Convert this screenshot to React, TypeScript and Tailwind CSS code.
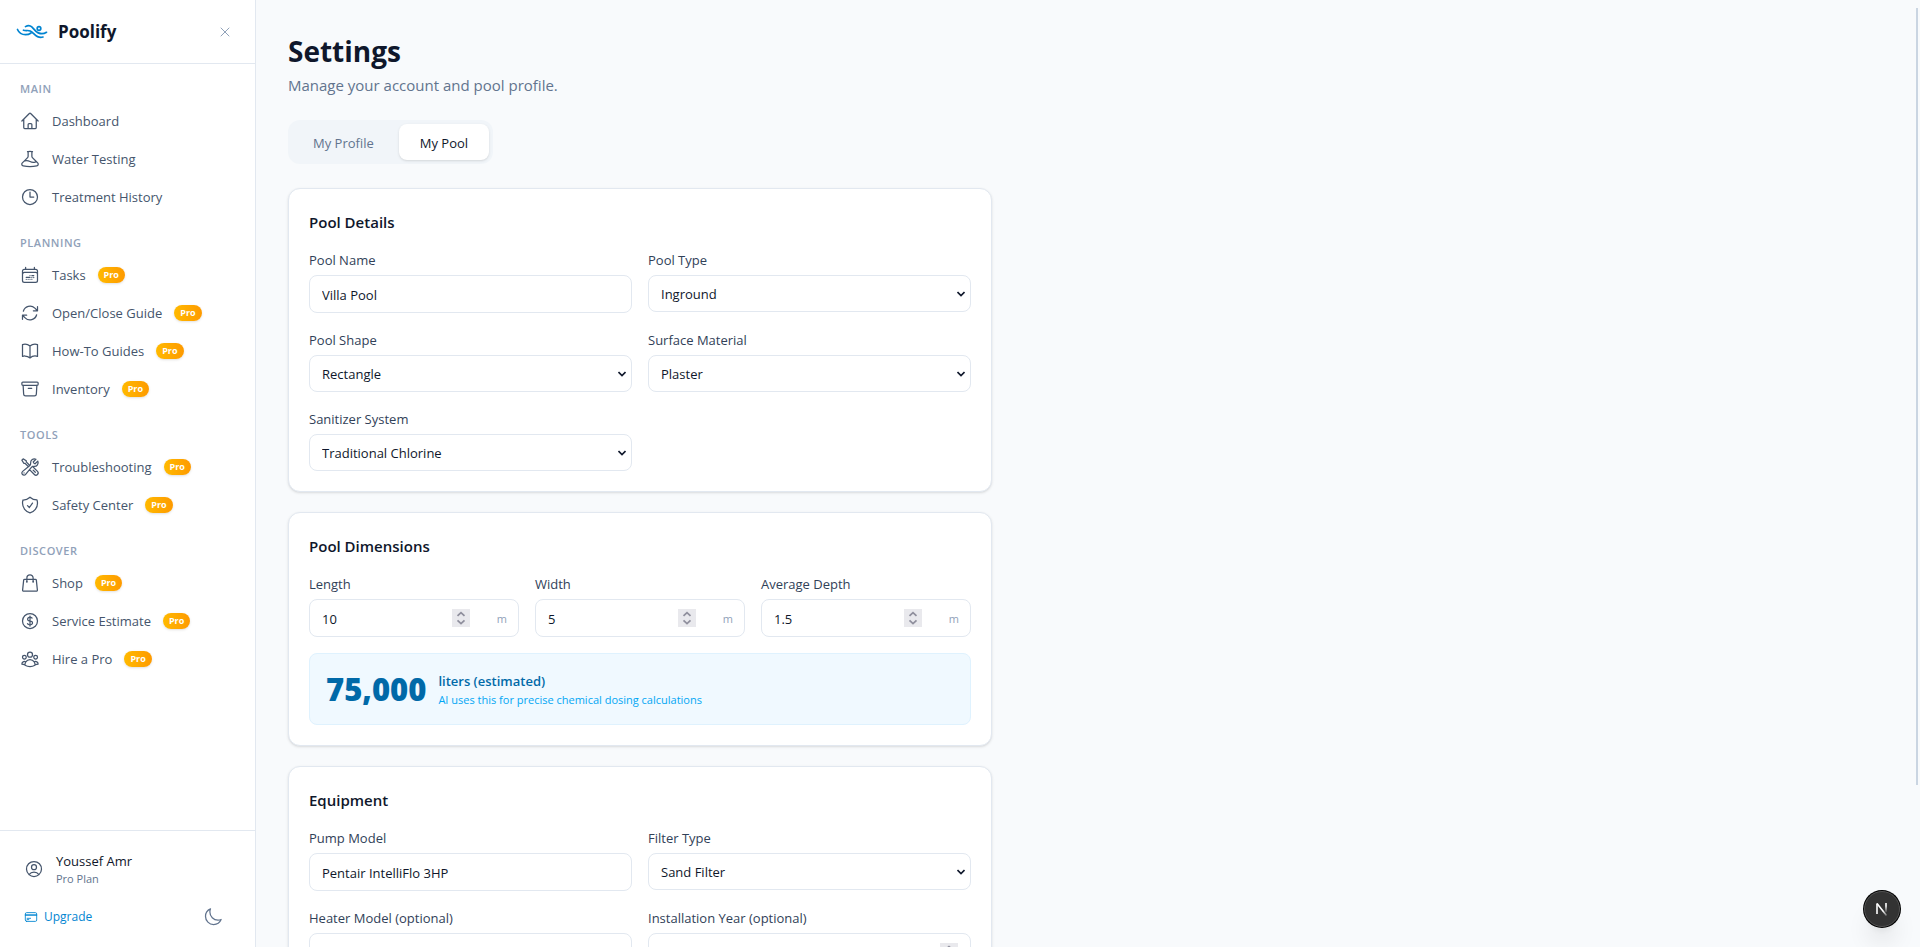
import type { ReactNode } from "react";
import type { IconType } from "react-icons";
import {
  HiOutlineArchiveBox,
  HiOutlineArrowPath,
  HiOutlineBeaker,
  HiOutlineBookOpen,
  HiOutlineCalendarDateRange,
  HiOutlineClock,
  HiOutlineCreditCard,
  HiOutlineCurrencyDollar,
  HiOutlineHome,
  HiOutlineMoon,
  HiOutlineShieldCheck,
  HiOutlineShoppingBag,
  HiOutlineUserCircle,
  HiOutlineUserGroup,
  HiOutlineWrenchScrewdriver,
  HiOutlineXMark,
} from "react-icons/hi2";

type NavItem = { label: string; icon: IconType; pro?: boolean };

// Sidebar navigation, grouped by section
const sections: { title: string; items: NavItem[] }[] = [
  {
    title: "Main",
    items: [
      { label: "Dashboard", icon: HiOutlineHome },
      { label: "Water Testing", icon: HiOutlineBeaker },
      { label: "Treatment History", icon: HiOutlineClock },
    ],
  },
  {
    title: "Planning",
    items: [
      { label: "Tasks", icon: HiOutlineCalendarDateRange, pro: true },
      { label: "Open/Close Guide", icon: HiOutlineArrowPath, pro: true },
      { label: "How-To Guides", icon: HiOutlineBookOpen, pro: true },
      { label: "Inventory", icon: HiOutlineArchiveBox, pro: true },
    ],
  },
  {
    title: "Tools",
    items: [
      { label: "Troubleshooting", icon: HiOutlineWrenchScrewdriver, pro: true },
      { label: "Safety Center", icon: HiOutlineShieldCheck, pro: true },
    ],
  },
  {
    title: "Discover",
    items: [
      { label: "Shop", icon: HiOutlineShoppingBag, pro: true },
      { label: "Service Estimate", icon: HiOutlineCurrencyDollar, pro: true },
      { label: "Hire a Pro", icon: HiOutlineUserGroup, pro: true },
    ],
  },
];

const fieldClass =
  "block w-full rounded-lg border border-slate-200 bg-white px-3 pt-[9px] pb-[7px] text-[13px] text-slate-900 outline-none focus:border-sky-500";

function Logo() {
  return (
    <svg viewBox="0 0 32 16" className="h-4 w-8 text-sky-600" fill="none" stroke="currentColor" strokeWidth="1.7" strokeLinecap="round" aria-hidden="true">
      <path d="M1.500 5.500C3 9 6 10.700 9.500 10.700c2.300 0 4-.6 5.500-1.700" />
      <path d="M7.500 6.200c2.500.8 4.500-.2 6.800.8 2.700 1.200 4.200 4.300 7.200 5.600 1.800.8 3.500.9 5.500.4" />
      <path d="M9.500 2.600c2.200-1.400 4.600-1.300 6.300.2 2.200 2 3.400 4.800 6.400 6.100 2.800 1.200 5.800 1 8.300-.6" />
      <circle cx="23" cy="4.500" r="1.800" />
    </svg>
  );
}

function Card({ title, children }: { title: string; children: ReactNode }) {
  return (
    <section className="rounded-xl border border-slate-200 bg-white p-5 shadow-sm">
      <h2 className="mb-3.5 text-[15px] leading-[26px] font-semibold text-slate-900">{title}</h2>
      {children}
    </section>
  );
}

function Field({ id, label, children }: { id: string; label: string; children: ReactNode }) {
  return (
    <div>
      <label htmlFor={id} className="mb-1 block text-[13px] leading-[22px] text-slate-700">
        {label}
      </label>
      {children}
    </div>
  );
}

function TextField({ id, label, value }: { id: string; label: string; value?: string }) {
  return (
    <Field id={id} label={label}>
      <input id={id} type="text" defaultValue={value} className={`${fieldClass} leading-5`} />
    </Field>
  );
}

function SelectField({ id, label, options }: { id: string; label: string; options: string[] }) {
  return (
    <Field id={id} label={label}>
      <div className="relative">
        <select id={id} className={`${fieldClass} appearance-none leading-[19px]`}>
          {options.map((option) => (
            <option key={option}>{option}</option>
          ))}
        </select>
        <svg viewBox="0 0 8 6" className="pointer-events-none absolute top-4 right-1.5 h-1.5 w-2 text-slate-900" fill="none" stroke="currentColor" strokeWidth="1.6" aria-hidden="true">
          <path d="M.5 1 4 4.600 7.500 1" />
        </svg>
      </div>
    </Field>
  );
}

function NumberField({ id, label, value, unit }: { id: string; label: string; value?: string; unit?: string }) {
  return (
    <Field id={id} label={label}>
      <div className="relative">
        <input
          id={id}
          type="number"
          step="any"
          defaultValue={value}
          className={`${fieldClass} [appearance:textfield] leading-5 [&::-webkit-inner-spin-button]:appearance-none`}
        />
        {/* Stepper arrows, shifted left when a unit is shown */}
        <svg
          viewBox="0 0 18 18"
          className={`pointer-events-none absolute top-2.5 size-[18px] bg-[#e9e9ed] text-[#8f8f9d] ${unit ? "right-[49px]" : "right-[13px]"}`}
          fill="none"
          stroke="currentColor"
          strokeWidth="1.8"
          aria-hidden="true"
        >
          <path d="M5.500 6.800 9 3.600l3.500 3.200M5.500 11.400 9 14.600l3.500-3.200" />
        </svg>
        {unit && <span className="absolute top-2.5 right-3 text-[11px] leading-5 text-slate-400">{unit}</span>}
      </div>
    </Field>
  );
}

function Sidebar() {
  return (
    <aside className="flex w-64 shrink-0 flex-col border-r border-slate-200 bg-white">
      <div className="flex h-16 items-center justify-between border-b border-slate-200 px-4">
        <a href="#" className="flex items-center gap-2.5">
          <Logo />
          <span className="text-[17px] leading-7 font-bold text-slate-900">Poolify</span>
        </a>
        <button type="button" aria-label="Close sidebar" className="p-1.5 text-slate-400">
          <HiOutlineXMark className="size-4" />
        </button>
      </div>

      <nav className="flex-1 space-y-[17px] px-3 py-3.5">
        {sections.map((section) => (
          <div key={section.title}>
            <p className="mb-[5px] px-2 pt-0.5 text-[11px] leading-[18px] font-semibold tracking-wider text-slate-400 uppercase">
              {section.title}
            </p>
            <ul className="space-y-0.5">
              {section.items.map(({ label, icon: Icon, pro }) => (
                <li key={label}>
                  <a href="#" className="flex items-center gap-3 rounded-lg px-2 py-2 text-[13px] leading-5 text-slate-600">
                    <Icon className="size-5 shrink-0" />
                    <span>{label}</span>
                    {pro && (
                      <span className="rounded-full bg-gradient-to-r from-amber-400 to-amber-500 px-1.5 text-[9px] leading-4 font-bold text-white shadow-sm">
                        Pro
                      </span>
                    )}
                  </a>
                </li>
              ))}
            </ul>
          </div>
        ))}
      </nav>

      {/* Account and theme controls */}
      <div className="border-t border-slate-200 p-3">
        <div className="flex items-center gap-3 px-3 py-2">
          <HiOutlineUserCircle className="size-5 shrink-0 text-slate-600" />
          <div>
            <p className="text-[13px] leading-5 text-slate-900">Youssef Amr</p>
            <p className="text-[11px] leading-4 text-slate-500">Pro Plan</p>
          </div>
        </div>
        <div className="flex items-center justify-between px-3 pt-1.5 pb-0.5">
          <a href="#" className="flex items-center gap-1.5 text-xs text-sky-600">
            <HiOutlineCreditCard className="size-3.5" />
            Upgrade
          </a>
          <button type="button" aria-label="Toggle dark mode" className="px-2 py-1.5 text-slate-500">
            <HiOutlineMoon className="size-5" />
          </button>
        </div>
      </div>
    </aside>
  );
}

export default function App() {
  return (
    <div className="flex h-screen overflow-hidden bg-slate-50 font-['Open_Sans','Noto_Sans',sans-serif]">
      <Sidebar />

      <main className="flex-1 overflow-hidden">
        <div className="max-w-3xl p-8">
          <h1 className="text-[28px] leading-[38px] font-bold text-slate-900">Settings</h1>
          <p className="mt-0.5 text-[15px] leading-[26px] text-slate-500">Manage your account and pool profile.</p>

          <div role="tablist" className="mt-[22px] mb-6 inline-flex gap-1 rounded-xl bg-slate-100 p-1">
            <button type="button" role="tab" aria-selected={false} className="rounded-lg px-[21px] pt-[9px] pb-[7px] text-[13px] leading-5 text-slate-500">
              My Profile
            </button>
            <button type="button" role="tab" aria-selected={true} className="rounded-lg bg-white px-[21px] pt-[9px] pb-[7px] text-[13px] leading-5 text-slate-900 shadow-sm">
              My Pool
            </button>
          </div>

          <form className="space-y-5">
            <Card title="Pool Details">
              <div className="grid grid-cols-2 gap-4">
                <TextField id="pool-name" label="Pool Name" value="Villa Pool" />
                <SelectField id="pool-type" label="Pool Type" options={["Inground", "Above Ground"]} />
                <SelectField id="pool-shape" label="Pool Shape" options={["Rectangle", "Oval", "Round"]} />
                <SelectField id="surface" label="Surface Material" options={["Plaster", "Vinyl", "Fiberglass"]} />
                <SelectField id="sanitizer" label="Sanitizer System" options={["Traditional Chlorine", "Salt Water"]} />
              </div>
            </Card>

            <Card title="Pool Dimensions">
              <div className="grid grid-cols-3 gap-4">
                <NumberField id="length" label="Length" value="10" unit="m" />
                <NumberField id="width" label="Width" value="5" unit="m" />
                <NumberField id="depth" label="Average Depth" value="1.5" unit="m" />
              </div>
              {/* Estimated volume */}
              <div className="mt-4 flex items-center gap-3 rounded-lg border border-sky-100 bg-sky-50 p-4">
                <span className="text-[31px] leading-[38px] font-extrabold text-sky-700">75,000</span>
                <div>
                  <p className="text-[13px] leading-[22px] font-semibold text-sky-700">liters (estimated)</p>
                  <p className="text-[11px] leading-4 text-sky-500">AI uses this for precise chemical dosing calculations</p>
                </div>
              </div>
            </Card>

            <Card title="Equipment">
              <div className="grid grid-cols-2 gap-4">
                <TextField id="pump" label="Pump Model" value="Pentair IntelliFlo 3HP" />
                <SelectField id="filter" label="Filter Type" options={["Sand Filter", "Cartridge Filter"]} />
                <TextField id="heater" label="Heater Model (optional)" />
                <NumberField id="year" label="Installation Year (optional)" />
              </div>
            </Card>
          </form>
        </div>
      </main>

      {/* Scroll position indicator */}
      <div aria-hidden="true" className="fixed top-2 right-0.5 h-[82%] w-0.5 bg-slate-300" />

      <button
        type="button"
        aria-label="Open developer tools"
        className="fixed right-5 bottom-5 flex size-9 items-center justify-center rounded-full border border-neutral-600 bg-[#333333] text-white shadow-xl ring-1 ring-black"
      >
        <svg viewBox="0 0 14 14" className="size-3.5" fill="none" strokeWidth="1.6" aria-hidden="true">
          <defs>
            <linearGradient id="slant" gradientUnits="userSpaceOnUse" x1="8" y1="9" x2="12" y2="14">
              <stop stopColor="#fff" />
              <stop offset="1" stopColor="#fff" stopOpacity="0.2" />
            </linearGradient>
            <linearGradient id="stem" gradientUnits="userSpaceOnUse" x1="11" y1="4" x2="11" y2="11">
              <stop stopColor="#fff" />
              <stop offset="1" stopColor="#fff" stopOpacity="0" />
            </linearGradient>
          </defs>
          <path d="M2 12V1.500" stroke="#fff" />
          <path d="M2 1.500 11.500 13.500" stroke="url(#slant)" />
          <path d="M11 1v9" stroke="url(#stem)" />
        </svg>
      </button>
    </div>
  );
}
